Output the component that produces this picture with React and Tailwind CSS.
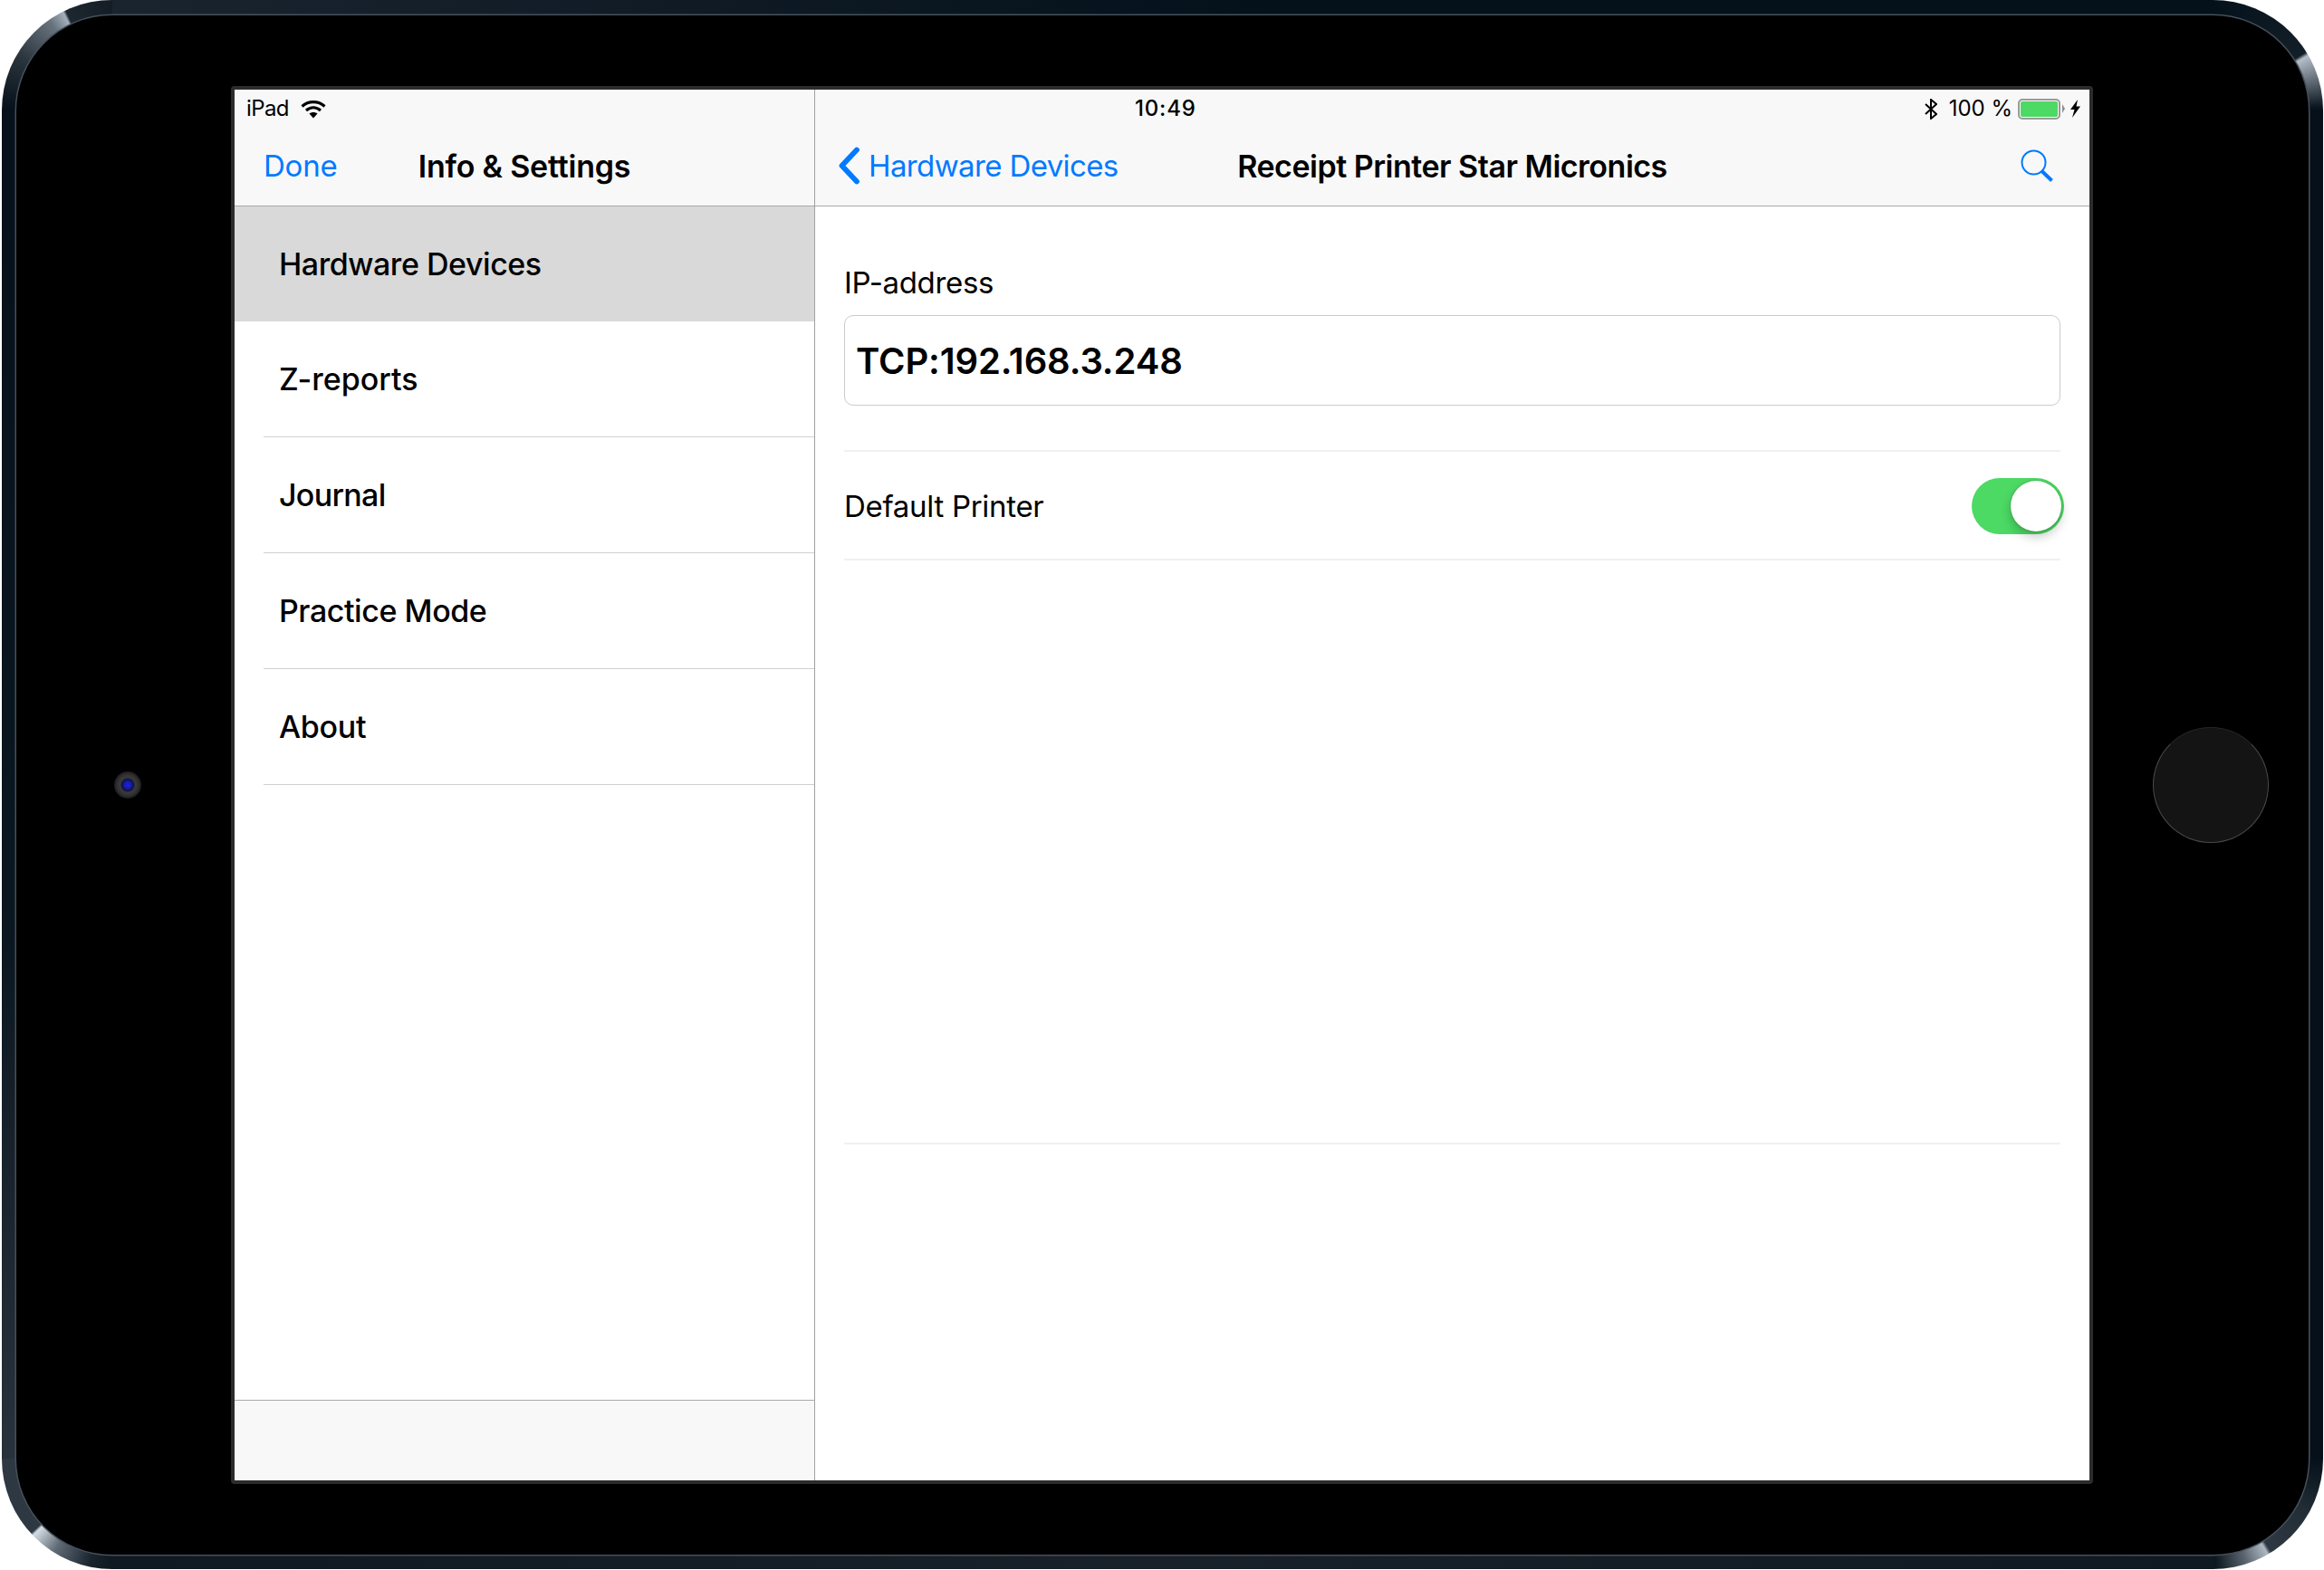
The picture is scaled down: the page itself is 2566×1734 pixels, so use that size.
import React from "react";

const font = "font-['Inter','Liberation_Sans',sans-serif]";

const rows = [
    { label: "Z-reports", track: "tracking-[0px]" },
    { label: "Journal", track: "tracking-[-0.7px]" },
    { label: "Practice Mode", track: "tracking-[-0.44px]" },
    { label: "About", track: "tracking-[-0.3px]" },
];

function Wifi() {
    return (
        <svg width="28" height="21" viewBox="0 0 28 21" className="ml-[13px] text-black">
            <path d="M1.5 7.5C8.5 1 19.5 1 26.5 7.5" fill="none" stroke="currentColor" strokeWidth="3.2" />
            <path d="M6 12C11 7.8 17 7.8 22 12" fill="none" stroke="currentColor" strokeWidth="3.2" />
            <path d="M9.5 15.6C12 13.6 16 13.6 18.5 15.6L14 20.5Z" fill="currentColor" />
        </svg>
    );
}

function Bluetooth() {
    return (
        <svg width="14" height="23" viewBox="0 0 14 23">
            <path d="M1 6L13 17L7 22L7 1L13 6L1 17" fill="none" stroke="#000" strokeWidth="2" />
        </svg>
    );
}

function Bolt() {
    return (
        <svg width="11" height="20" viewBox="0 0 11 20">
            <path d="M8 0L0 11H4.5L2 20L11 7.5H6.5Z" fill="#000" />
        </svg>
    );
}

function Chevron() {
    return (
        <svg width="24" height="42" viewBox="0 0 24 42">
            <path d="M21 3.5L4.5 21L21 38.5" fill="none" stroke="#007aff" strokeWidth="5.8" strokeLinecap="round" strokeLinejoin="round" />
        </svg>
    );
}

function SearchIcon() {
    return (
        <svg width="36" height="36" viewBox="0 0 36 36">
            <circle cx="14.5" cy="14.5" r="13" fill="none" stroke="#007aff" strokeWidth="2" />
            <path d="M23.5 24L34.5 34.5" fill="none" stroke="#007aff" strokeWidth="4" />
        </svg>
    );
}

function Battery() {
    return (
        <div className="flex items-center">
            <div className="w-[47px] h-[23px] rounded-[5px] border-2 border-[#9a9a9a] p-[1px]">
                <div className="w-full h-full rounded-[2px] bg-[#4cd964]" />
            </div>
            <div className="w-0 h-0 ml-[2px] border-y-[5px] border-y-transparent border-l-[3px] border-l-[#8f8f8f]" />
        </div>
    );
}

function Sidebar() {
    return (
        <div className="w-[641px] h-full flex flex-col border-r border-[#a0a0a0] bg-white">
            <div className="h-[129px] bg-[#f8f8f8] border-b border-[#a9a9a9] flex flex-col">
                <div className="h-[40px] pl-[13px] pt-[2px] flex items-center text-[24px] text-black">
                    <span className="tracking-[-0.6px]">iPad</span>
                    <Wifi />
                </div>
                <div className="h-[88px] grid grid-cols-[1fr_auto_1fr] items-center px-[32px]">
                    <span className="pt-[2px] text-[33px] tracking-[-0.2px] text-[#007aff]">Done</span>
                    <span className="text-[34px] tracking-[-0.22px] font-semibold text-black">Info &amp; Settings</span>
                    <span />
                </div>
            </div>
            <div className="h-[127px] pl-[49px] flex items-center bg-[#d9d9d9] text-[34px] tracking-[-0.46px] font-medium text-black">
                Hardware Devices
            </div>
            {rows.map((r) => (
                <div
                    key={r.label}
                    className={`h-[128px] ml-[32px] pl-[17px] flex items-center border-b border-[#d0d0d4] text-[34px] font-medium text-black ${r.track}`}
                >
                    {r.label}
                </div>
            ))}
            <div className="mt-auto h-[89px] bg-[#f8f8f8] border-t border-[#a9a9a9]" />
        </div>
    );
}

function Toggle() {
    return (
        <div className="w-[102px] h-[62px] -mr-[4px] rounded-full bg-[#4cd964] flex items-center justify-end pr-[3px]">
            <div className="w-[56px] h-[56px] rounded-full bg-white shadow-[0_6px_12px_rgba(0,0,0,0.22),0_0_2px_rgba(0,0,0,0.3)]" />
        </div>
    );
}

function Detail() {
    return (
        <div className="flex-1 h-full flex flex-col bg-white">
            <div className="h-[129px] bg-[#f8f8f8] border-b border-[#a9a9a9] flex flex-col">
                <div className="h-[40px] flex items-center pl-[353px] pr-[10px] pt-[2px] text-[24px] text-black">
                    <span className="font-medium tracking-[0.8px]">10:49</span>
                    <div className="ml-auto flex items-center">
                        <Bluetooth />
                        <span className="ml-[13px] mr-[6px]">100 %</span>
                        <Battery />
                        <div className="ml-[6px]"><Bolt /></div>
                    </div>
                </div>
                <div className="h-[88px] grid grid-cols-[1fr_auto_1fr] items-center">
                    <div className="pl-[25px] flex items-center text-[33px] tracking-[-0.62px] text-[#007aff]">
                        <Chevron />
                        <span className="ml-[10px] pt-[2px]">Hardware Devices</span>
                    </div>
                    <span className="text-[34px] tracking-[-0.49px] font-semibold text-black">Receipt Printer Star Micronics</span>
                    <div className="flex justify-end pr-[40px]">
                        <SearchIcon />
                    </div>
                </div>
            </div>
            <div className="px-[32px] flex flex-col">
                <div className="h-[120px] pt-[59px] text-[33px] tracking-[-0.35px] leading-[50px] text-black">IP-address</div>
                <div className="h-[100px] px-[12px] pt-[2px] flex items-center rounded-[10px] border border-[#cbcbcb] text-[40px] tracking-[-0.12px] font-semibold text-black">
                    TCP:192.168.3.248
                </div>
                <div className="mt-[49px] h-[122px] pt-[2px] flex items-center justify-between border-y-2 border-[#efeff4] text-[33px] tracking-[-0.3px] text-black">
                    <span className="pt-[2px]">Default Printer</span>
                    <Toggle />
                </div>
                <div className="h-[645px] border-b-2 border-[#efeff4]" />
            </div>
        </div>
    );
}

export default function App() {
    return (
        <div className={`w-[2566px] h-[1734px] bg-white pl-[2px] pr-[1px] ${font}`}>
            <div className="w-full h-[1733px] pt-[17px] pb-[16px] px-[16px] rounded-[122px] [background:conic-gradient(from_270deg_at_122px_122px,#05101a_0deg,#2a343d_30deg,#66727d_55deg,#a3afba_63.5deg,#1d2730_65deg,#141d25_90deg)_0_0/122px_122px_no-repeat,conic-gradient(from_0deg_at_0_122px,#04101a_0deg,#131f28_58deg,#b4bec8_60deg,#6a757f_72deg,#0a1620_88deg,#06101a_90deg)_100%_0/122px_122px_no-repeat,conic-gradient(from_180deg_at_122px_0,#0d1820_0deg,#1a242d_12deg,#5f6a75_32deg,#d5dce3_46deg,#2e3842_47.5deg,#2e3842_90deg)_0_100%/122px_122px_no-repeat,conic-gradient(from_90deg_at_0_0,#06101a_0deg,#232d36_30deg,#2e3842_58deg,#aeb8c2_60deg,#5a6570_72deg,#0e1820_88deg,#0d1820_90deg)_100%_100%/122px_122px_no-repeat,linear-gradient(to_bottom,#05101a,#0b1720_60%,#2e3842)_0_0/20px_100%_no-repeat,linear-gradient(to_right,#1c2630,#04101a_55%,#04101a)_0_0/100%_20px_no-repeat,linear-gradient(to_right,#0d1820,#182129_50%,#0d1820)_0_100%/100%_20px_no-repeat,#05101a]">
                <div className="w-full h-full rounded-[106px] bg-black shadow-[0_0_0_1.5px_#46505b] flex items-center">
                    <div className="w-[237px] pl-[108px] shrink-0">
                        <div className="w-[30px] h-[30px] rounded-full bg-[radial-gradient(circle_closest-side,#2020e0_0%,#1a1ab0_25%,#0c1440_42%,#3a3a3c_55%,#333333_75%,#1c1c1c_100%)]" />
                    </div>
                    <div className="w-[2056px] h-[1544px] shrink-0 border-4 border-[#2c2c2c] rounded-[4px] flex">
                        <Sidebar />
                        <Detail />
                    </div>
                    <div className="pl-[66px]">
                        <div className="w-[128px] h-[128px] rounded-full bg-[#141414] border-[1.5px] border-[#4a4a4a] border-t-[#262626]" />
                    </div>
                </div>
            </div>
        </div>
    );
}
